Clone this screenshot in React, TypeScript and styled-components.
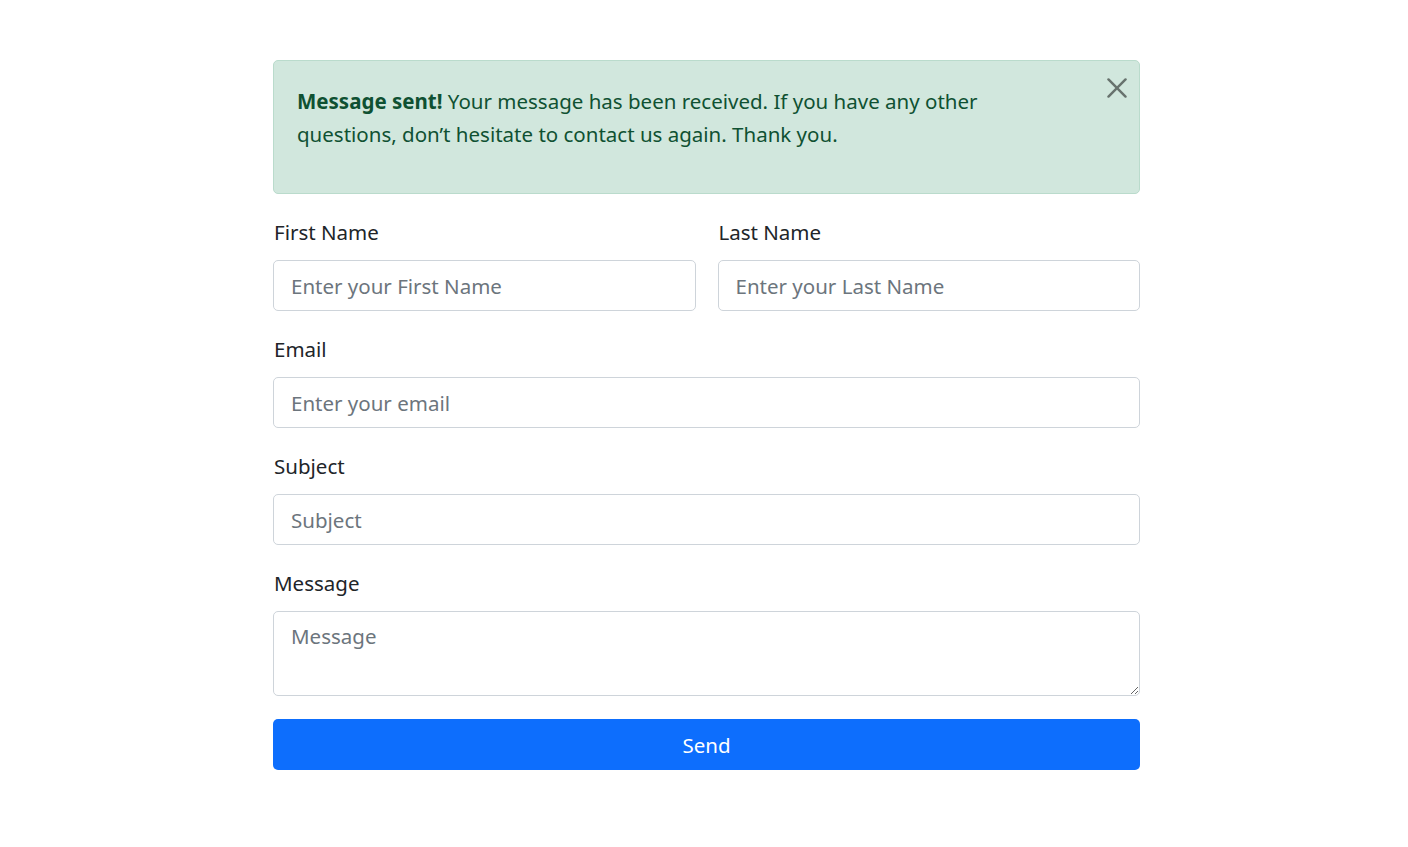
import React, { useState } from "react";
import styled, { createGlobalStyle } from "styled-components";

const GlobalStyle = createGlobalStyle`
  * {
    box-sizing: border-box;
  }
  body {
    margin: 0;
    background: #fff;
    color: #212529;
    font-family: "Noto Sans", "Open Sans", sans-serif;
    font-size: 20.5px;
    line-height: 1.5;
  }
`;

const Page = styled.div`
  display: flex;
  justify-content: center;
  padding-top: 60px;
  padding-left: 5px;
`;

const Wrapper = styled.div`
  width: 867px;
  display: flex;
  flex-direction: column;
`;

const Alert = styled.div`
  position: relative;
  background-color: #d1e7dd;
  border: 1px solid #badbcc;
  border-radius: 5px;
  color: #0f5132;
  padding: 21px 64px 21px 23px;
  margin-bottom: 22px;
  height: 134px;
`;

const AlertText = styled.p`
  margin: 0;
  padding-top: 3px;
  line-height: 32.5px;
`;

const CloseButton = styled.button`
  position: absolute;
  top: 15px;
  right: 10px;
  width: 24px;
  height: 24px;
  padding: 0;
  border: 0;
  background: transparent;
  cursor: pointer;
  display: flex;
  align-items: center;
  justify-content: center;
  color: #000;
  opacity: 0.5;
`;

const Row = styled.div`
  display: grid;
  grid-template-columns: 1fr 1fr;
  column-gap: 22px;
`;

const Group = styled.div`
  display: flex;
  flex-direction: column;
  margin-bottom: 22px;
`;

const Label = styled.label`
  display: block;
  line-height: 32px;
  margin-bottom: 12px;
  padding-left: 1px;
  color: #212529;
`;

const Input = styled.input`
  width: 100%;
  height: 51px;
  padding: 0 17px;
  font-family: inherit;
  font-size: 20.5px;
  color: #212529;
  background: #fff;
  border: 1px solid #ced4da;
  border-radius: 5px;
  outline: none;
  &::placeholder {
    color: #6c757d;
  }
`;

const TextArea = styled.textarea`
  width: 100%;
  height: 85px;
  padding: 9px 17px;
  font-family: inherit;
  font-size: 20.5px;
  line-height: 1.5;
  color: #212529;
  background: #fff;
  border: 1px solid #ced4da;
  border-radius: 5px;
  outline: none;
  resize: vertical;
  display: block;
  &::placeholder {
    color: #6c757d;
  }
`;

const SendButton = styled.button`
  width: 100%;
  height: 51px;
  margin-top: 1px;
  border: 0;
  border-radius: 5px;
  background-color: #0d6efd;
  color: #fff;
  font-family: inherit;
  font-size: 20.5px;
  cursor: pointer;
`;

const App: React.FC = () => {
  const [open, setOpen] = useState(true);
  return (
    <>
      <GlobalStyle />
      <Page>
        <Wrapper>
          {open && (
            <Alert>
              <AlertText>
                <strong>Message sent!</strong> Your message has been received. If you have any other questions,
                don’t hesitate to contact us again. Thank you.
              </AlertText>
              <CloseButton onClick={() => setOpen(false)} aria-label="Close">
                <svg width="24" height="24" viewBox="0 0 16 16" fill="currentColor">
                  <path d="M.293.293a1 1 0 0 1 1.414 0L8 6.586 14.293.293a1 1 0 1 1 1.414 1.414L9.414 8l6.293 6.293a1 1 0 0 1-1.414 1.414L8 9.414l-6.293 6.293a1 1 0 0 1-1.414-1.414L6.586 8 .293 1.707a1 1 0 0 1 0-1.414z" transform="translate(1.5 1.5) scale(0.8125)" />
                </svg>
              </CloseButton>
            </Alert>
          )}
          <Row>
            <Group>
              <Label>First Name</Label>
              <Input placeholder="Enter your First Name" />
            </Group>
            <Group>
              <Label>Last Name</Label>
              <Input placeholder="Enter your Last Name" />
            </Group>
          </Row>
          <Group>
            <Label>Email</Label>
            <Input type="email" placeholder="Enter your email" />
          </Group>
          <Group>
            <Label>Subject</Label>
            <Input placeholder="Subject" />
          </Group>
          <Group>
            <Label>Message</Label>
            <TextArea placeholder="Message" />
          </Group>
          <SendButton>Send</SendButton>
        </Wrapper>
      </Page>
    </>
  );
};

export default App;
